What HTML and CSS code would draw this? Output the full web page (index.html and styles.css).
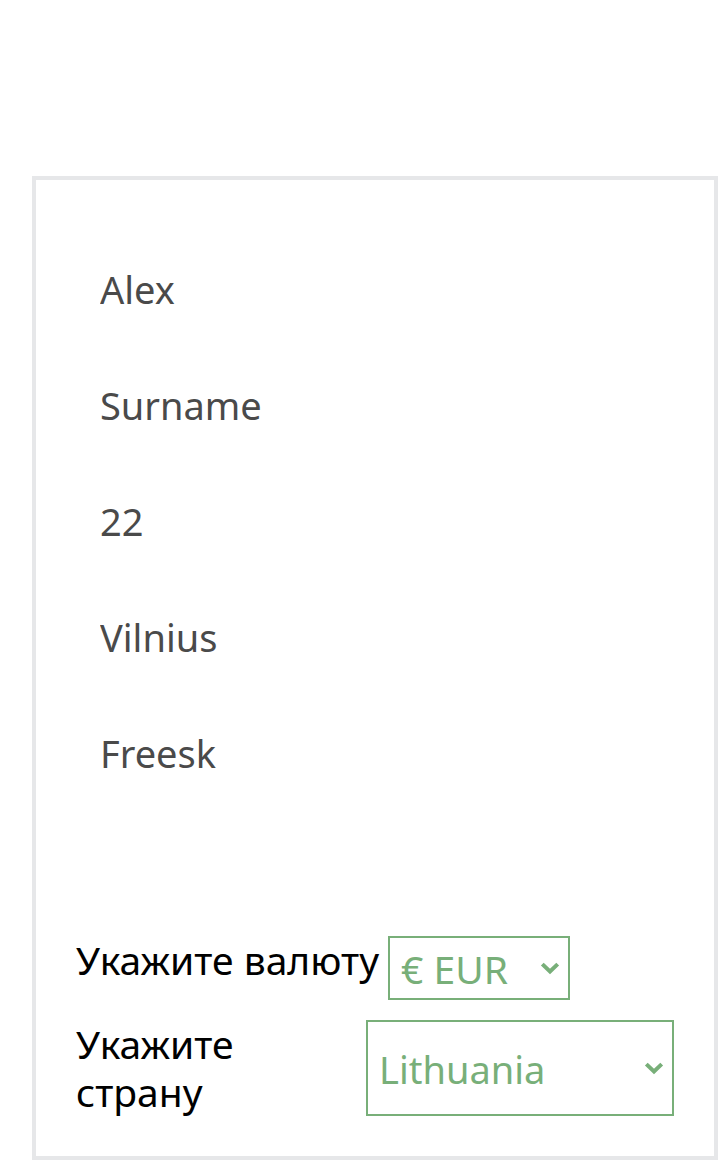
FILE: index.html
```html
<!DOCTYPE html>
<html lang="ru">
<head>
<meta charset="utf-8">
<meta name="viewport" content="width=device-width, initial-scale=1">
<title>Profile</title>
<link rel="stylesheet" href="styles.css">
</head>
<body>
<form class="card">
  <div class="fields">
    <input class="field" type="text" aria-label="Имя" value="Alex">
    <input class="field" type="text" aria-label="Фамилия" value="Surname">
    <input class="field" type="text" aria-label="Возраст" value="22">
    <input class="field" type="text" aria-label="Город" value="Vilnius">
    <input class="field" type="text" aria-label="Компания" value="Freesk">
  </div>
  <div class="row">
    <label class="label" for="currency">Укажите валюту</label>
    <div class="picker picker-currency">
      <select class="select" id="currency"><option>€ EUR</option></select>
      <svg class="chevron" viewBox="0 0 20 14" aria-hidden="true"><path d="M2.3 3.1 L10 10.4 L17.7 3.1"/></svg>
    </div>
  </div>
  <div class="row row-country">
    <label class="label" for="country">Укажите страну</label>
    <div class="picker picker-country">
      <select class="select" id="country"><option>Lithuania</option></select>
      <svg class="chevron" viewBox="0 0 20 14" aria-hidden="true"><path d="M2.3 3.1 L10 10.4 L17.7 3.1"/></svg>
    </div>
  </div>
</form>
</body>
</html>
```
FILE: styles.css
```css
* {
  box-sizing: border-box;
}

body {
  margin: 0;
  padding: 176px 0 0 32px;
  background: #fff;
  font-family: "Noto Sans", "Open Sans", sans-serif;
  font-size: 38px;
  line-height: 48px;
}

.card {
  padding: 52px 40px 40px;
  border: 4px solid #e6e7e9;
}

.fields {
  display: flex;
  flex-direction: column;
  margin-bottom: 124px;
}

.field {
  width: 100%;
  height: 116px;
  padding: 0 24px 2px;
  border: 0;
  background: none;
  color: #4a4a4a;
  font: inherit;
}

.row {
  display: flex;
  justify-content: flex-start;
  gap: 9px;
}

.row-country {
  justify-content: space-between;
  margin-top: 20px;
}

.label {
  color: #000;
  font-size: 39px;
}

.row-country .label {
  width: 180px;
}

.picker {
  position: relative;
}

.picker-currency {
  width: 182px;
  height: 64px;
  font-size: 39px;
}

.picker-country {
  width: 308px;
  height: 96px;
}

.select {
  width: 100%;
  height: 100%;
  padding: 2px 11px 0;
  border: 2px solid #78af79;
  border-radius: 0;
  background: none;
  color: #78af79;
  font: inherit;
  appearance: none;
}

.chevron {
  position: absolute;
  top: 50%;
  right: 10px;
  width: 20px;
  height: 14px;
  margin-top: -7px;
  fill: none;
  stroke: #78af79;
  stroke-width: 4;
  pointer-events: none;
}
```
